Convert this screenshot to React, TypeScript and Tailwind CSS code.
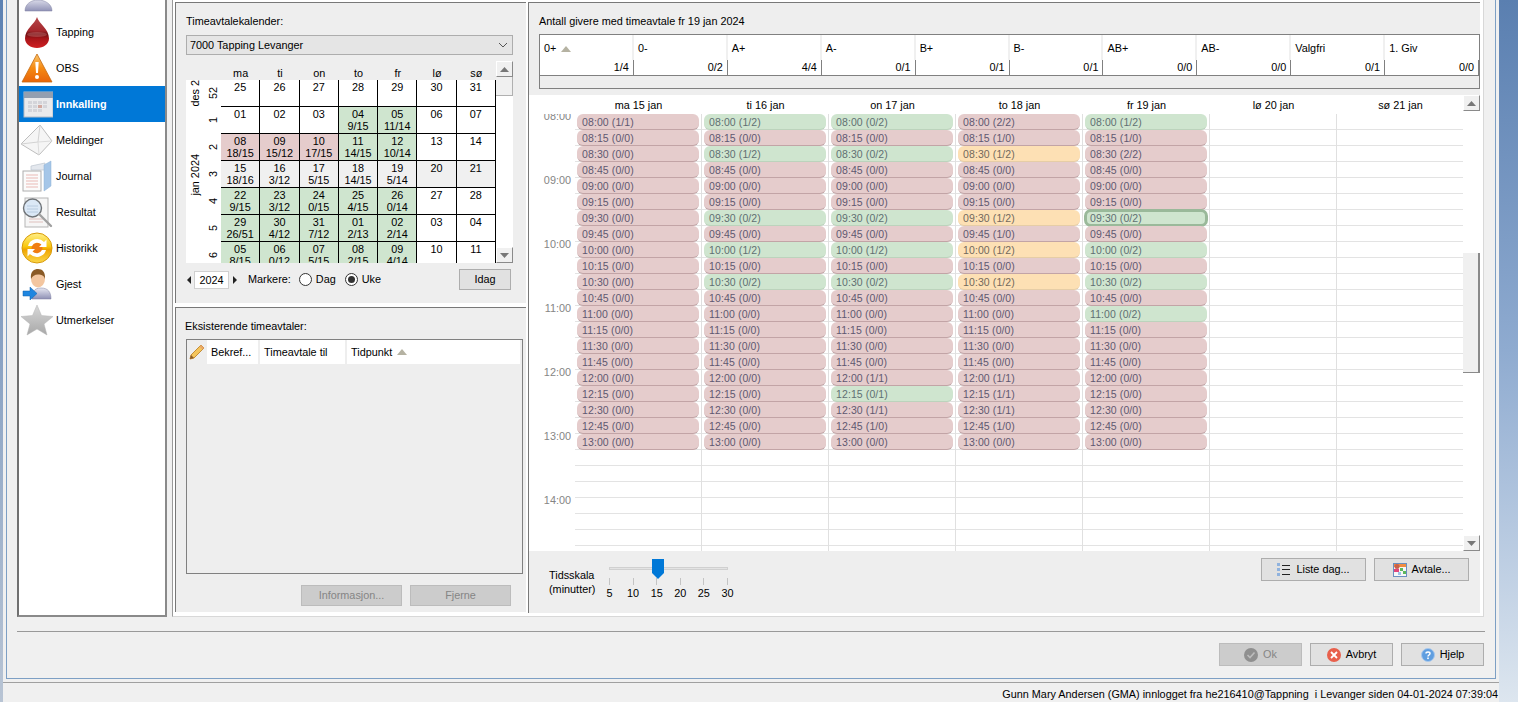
import React from "react";

type Tone = "r" | "g" | "o";

// ---------- icons ----------
function DropIcon() {
  return (
    <svg width="32" height="32" viewBox="0 0 32 32">
      <defs>
        <linearGradient id="dropFill" x1="0" y1="0" x2="0" y2="1">
          <stop offset="0" stopColor="#b4474a" />
          <stop offset="0.45" stopColor="#a5272c" />
          <stop offset="0.55" stopColor="#6e0f12" />
          <stop offset="0.7" stopColor="#a81519" />
          <stop offset="1" stopColor="#cf1f22" />
        </linearGradient>
      </defs>
      <path d="M16 1C14 8 4 13 4 22.500C4 28 9.500 32 16 32C22.500 32 28 28 28 22.500C28 13 18 8 16 1Z" fill="url(#dropFill)" />
      <ellipse cx="16" cy="18.500" rx="10" ry="2.500" fill="#d98a8a" opacity="0.35" />
    </svg>
  );
}
function WarnIcon() {
  return (
    <svg width="32" height="32" viewBox="0 0 32 32">
      <defs>
        <linearGradient id="warnFill" x1="0" y1="0" x2="0" y2="1">
          <stop offset="0" stopColor="#f9c56c" />
          <stop offset="0.5" stopColor="#f58a12" />
          <stop offset="1" stopColor="#e8640a" />
        </linearGradient>
      </defs>
      <path d="M16 2L31 30H1Z" fill="url(#warnFill)" stroke="#c46a12" strokeWidth="0.800" strokeLinejoin="round" />
      <path d="M14.300 10H17.700L17 21H15Z" fill="#fff" />
      <circle cx="16" cy="25" r="2" fill="#fff" />
    </svg>
  );
}
function CalendarIcon() {
  return (
    <svg width="32" height="32" viewBox="0 0 32 32">
      <rect x="3" y="4" width="29" height="25" fill="#e9eaec" stroke="#b5bcc6" />
      <rect x="3" y="4" width="29" height="6" fill="#939fb0" />
      <g fill="#d4d5da">
        <rect x="7" y="13" width="4" height="3" /><rect x="12" y="13" width="4" height="3" /><rect x="17" y="13" width="4" height="3" /><rect x="22" y="13" width="4" height="3" />
        <rect x="7" y="17" width="4" height="3" /><rect x="12" y="17" width="4" height="3" /><rect x="22" y="17" width="4" height="3" />
        <rect x="7" y="21" width="4" height="3" /><rect x="12" y="21" width="4" height="3" /><rect x="17" y="21" width="4" height="3" />
      </g>
      <rect x="17" y="17" width="4" height="3" fill="#d2a9a0" />
    </svg>
  );
}
function MailIcon() {
  return (
    <svg width="32" height="32" viewBox="0 0 32 32">
      <path d="M0 20L19 1L31 17L18 31Z" fill="#f5f5f5" stroke="#bdbdbd" />
      <path d="M0 20L17 18L19 1" fill="none" stroke="#d2d2d2" />
      <path d="M18 31L17 18L31 17" fill="none" stroke="#dcdcdc" />
    </svg>
  );
}
function JournalIcon() {
  return (
    <svg width="32" height="32" viewBox="0 0 32 32">
      <path d="M10 6L24 3V10H10Z" fill="#e4e8ee" stroke="#bcc4ce" strokeWidth="0.700" />
      <path d="M23 5L30 1V26L23 31Z" fill="#a5c6e8" stroke="#8fb2d6" strokeWidth="0.500" />
      <rect x="2" y="11" width="18" height="20" fill="#fbfbfb" stroke="#aeaeae" />
      <path d="M5 15H17M5 18H17M5 21H17M5 24H17M5 27H17" stroke="#e6a9a4" strokeWidth="0.800" />
    </svg>
  );
}
function SearchIcon() {
  return (
    <svg width="32" height="32" viewBox="0 0 32 32">
      <rect x="4" y="2" width="23" height="29" fill="#f6f6f6" stroke="#b5b5b5" />
      <path d="M8 23H22M8 26H22" stroke="#d9b4b0" strokeWidth="0.800" />
      <circle cx="11.500" cy="12" r="9" fill="#dbe8f6" stroke="#6f7377" strokeWidth="1.400" />
      <path d="M6 10H17M6 13H17M6 16H17" stroke="#b0c4da" strokeWidth="0.800" />
      <path d="M18.500 18.500L30 30" stroke="#a0a0a0" strokeWidth="2.400" strokeLinecap="round" />
    </svg>
  );
}
function SyncIcon() {
  return (
    <svg width="32" height="32" viewBox="0 0 32 32">
      <defs>
        <linearGradient id="syncFill" x1="0" y1="0" x2="0" y2="1">
          <stop offset="0" stopColor="#fff08a" />
          <stop offset="0.45" stopColor="#f9c80e" />
          <stop offset="0.55" stopColor="#f0a400" />
          <stop offset="1" stopColor="#fbd84a" />
        </linearGradient>
      </defs>
      <circle cx="16" cy="16" r="15" fill="url(#syncFill)" stroke="#d89a08" />
      <circle cx="16" cy="16" r="5.500" fill="#f07d12" />
      <path d="M7 14A9.500 9.500 0 0 1 23 10L25.500 7.500V15H18L20.500 12.500A6 6 0 0 0 11 14Z" fill="#fff" />
      <path d="M25 18A9.500 9.500 0 0 1 9 22L6.500 24.500V17H14L11.500 19.500A6 6 0 0 0 21 18Z" fill="#fff" />
    </svg>
  );
}
function GuestIcon() {
  return (
    <svg width="32" height="32" viewBox="0 0 32 32">
      <defs>
        <linearGradient id="guestBody" x1="0" y1="0" x2="0" y2="1">
          <stop offset="0" stopColor="#e6e7f2" />
          <stop offset="1" stopColor="#8e90b4" />
        </linearGradient>
      </defs>
      <path d="M11 31C11 24 13 20 20 20C27 20 30 24 30 31Z" fill="url(#guestBody)" stroke="#7c7fa0" strokeWidth="0.500" />
      <ellipse cx="17" cy="11" rx="7" ry="8.500" fill="#f3c6a0" />
      <path d="M10 11C9 3 13.500 1 17 1C21.500 1 24.500 4 24 11C23 7.500 20.500 6.500 17 6.500C13.500 6.500 11.500 8 10 11Z" fill="#8a5a26" />
      <path d="M2 23H9V19L16 25.500L9 32V28H2Z" fill="#1f86e0" stroke="#0d5fab" strokeWidth="0.500" />
    </svg>
  );
}
function StarIcon() {
  return (
    <svg width="32" height="32" viewBox="0 0 32 32">
      <defs>
        <linearGradient id="starFill" x1="0" y1="0" x2="0" y2="1">
          <stop offset="0" stopColor="#d8d8d8" />
          <stop offset="1" stopColor="#a8a8a8" />
        </linearGradient>
      </defs>
      <path d="M16 1L20.500 11.500L32 12.500L23 20L26 31L16 25L6 31L9 20L0 12.500L11.500 11.500Z" fill="url(#starFill)" stroke="#b5b5b5" strokeWidth="0.500" />
    </svg>
  );
}
function TopCutIcon() {
  return (
    <svg width="32" height="32" viewBox="0 0 32 32">
      <defs>
        <linearGradient id="topBody" x1="0" y1="0" x2="0" y2="1">
          <stop offset="0" stopColor="#d8d9e8" />
          <stop offset="1" stopColor="#9092b6" />
        </linearGradient>
      </defs>
      <path d="M3 31C3 24 9 20 16 20C23 20 30 24 30 31Z" fill="url(#topBody)" stroke="#7c7fa0" strokeWidth="0.500" />
    </svg>
  );
}
function PencilIcon() {
  return (
    <svg width="16" height="16" viewBox="0 0 16 16">
      <path d="M12 1L15 4L5 14L1 15L2 11Z" fill="#f4c55c" stroke="#b9791c" strokeWidth="0.800" strokeLinejoin="round" />
      <path d="M2 11L5 14L1 15Z" fill="#8a5a2a" />
      <path d="M12 1L15 4L13.500 5.500L10.500 2.500Z" fill="#e8a66a" />
    </svg>
  );
}
function ListIcon() {
  return (
    <svg width="14" height="14" viewBox="0 0 14 14">
      <g fill="#8fb2de">
        <rect x="0" y="0" width="3" height="3" />
        <rect x="0" y="5" width="3" height="3" />
        <rect x="0" y="10" width="3" height="3" />
      </g>
      <path d="M5 2.500H13M5 6.500H13M5 11.500H13" stroke="#222" />
    </svg>
  );
}
function AvtaleIcon() {
  return (
    <svg width="14" height="14" viewBox="0 0 14 14">
      <rect x="0.500" y="0.500" width="13" height="13" fill="#f7f7f7" stroke="#6a8fc0" />
      <rect x="1" y="1" width="12" height="3" fill="#f08c40" />
      <rect x="7" y="5" width="3" height="3" fill="#5cb85c" />
      <rect x="10" y="8" width="3" height="3" fill="#5cb85c" />
      <rect x="5" y="9" width="3" height="3" fill="#9cc4e8" />
      <circle cx="4" cy="3.500" r="2.500" fill="#c9604a" />
      <rect x="1" y="6" width="5" height="3" fill="#e0457a" />
    </svg>
  );
}
function OkIcon() {
  return (
    <svg width="14" height="14" viewBox="0 0 14 14">
      <circle cx="7" cy="7" r="7" fill="#8f8f8f" />
      <path d="M3.500 7L6 9.500L10.500 4.500" fill="none" stroke="#bdbdbd" strokeWidth="1.600" />
    </svg>
  );
}
function CancelIcon() {
  return (
    <svg width="14" height="14" viewBox="0 0 14 14">
      <circle cx="7" cy="7" r="7" fill="#e8604c" />
      <path d="M4 4L10 10M10 4L4 10" stroke="#fff" strokeWidth="1.800" />
    </svg>
  );
}
function HelpIcon() {
  return (
    <svg width="14" height="14" viewBox="0 0 14 14">
      <circle cx="7" cy="7" r="6.500" fill="#5f9ee0" stroke="#a9c8ec" />
      <path d="M5 5.500C5 3.500 9 3.500 9 5.500C9 7 7 7 7 8.500" fill="none" stroke="#fff" strokeWidth="1.500" />
      <rect x="6.200" y="9.500" width="1.600" height="1.600" fill="#fff" />
    </svg>
  );
}
function Caret({ dir }: { dir: "up" | "down" }) {
  return (
    <svg width="9" height="5" viewBox="0 0 9 5">
      <path d={dir === "up" ? "M4.500 0L9 5H0Z" : "M0 0H9L4.500 5Z"} fill="#777777" />
    </svg>
  );
}
function SortUp() {
  return (
    <svg width="10" height="6" viewBox="0 0 10 6" className="ml-[5px]">
      <path d="M5 0L10 6H0Z" fill="#b5b2a2" />
    </svg>
  );
}

// ---------- sidebar ----------
const navItems: { label: string; icon: React.ReactNode }[] = [
  { label: "Tapping", icon: <DropIcon /> },
  { label: "OBS", icon: <WarnIcon /> },
  { label: "Innkalling", icon: <CalendarIcon /> },
  { label: "Meldinger", icon: <MailIcon /> },
  { label: "Journal", icon: <JournalIcon /> },
  { label: "Resultat", icon: <SearchIcon /> },
  { label: "Historikk", icon: <SyncIcon /> },
  { label: "Gjest", icon: <GuestIcon /> },
  { label: "Utmerkelser", icon: <StarIcon /> },
];

function Sidebar() {
  return (
    <div className="ml-[10px] w-[150px] h-[617px] border-2 border-t-0 border-l-[#707070] border-r-[#8a8a8a] border-b-[#8a8a8a] bg-white overflow-hidden flex flex-col shrink-0">
      <div className="h-[36px] -mt-[22px] shrink-0 flex items-center pl-[3px]">
        <TopCutIcon />
      </div>
      {navItems.map((item) => {
        const active = item.label === "Innkalling";
        return (
          <div
            key={item.label}
            className={
              active
                ? "h-[36px] shrink-0 flex items-center pl-[2px] bg-[#0078d7] text-white font-bold"
                : "h-[36px] shrink-0 flex items-center pl-[2px] text-black"
            }
          >
            <div className="w-[32px] h-[32px] shrink-0">{item.icon}</div>
            <span className="ml-[3px]">{item.label}</span>
          </div>
        );
      })}
    </div>
  );
}

// ---------- calendar ----------
type CalCell = { d: string; n?: string; c?: string };
const G = "bg-[#cfe5cf]";
const R = "bg-[#e5cccc]";
const S = "bg-[#f0f0f0]";
const calRows: { week: string; cells: CalCell[] }[] = [
  { week: "52", cells: [{ d: "25" }, { d: "26" }, { d: "27" }, { d: "28" }, { d: "29" }, { d: "30" }, { d: "31" }] },
  { week: "1", cells: [{ d: "01" }, { d: "02" }, { d: "03" }, { d: "04", n: "9/15", c: G }, { d: "05", n: "11/14", c: G }, { d: "06" }, { d: "07" }] },
  { week: "2", cells: [{ d: "08", n: "18/15", c: R }, { d: "09", n: "15/12", c: R }, { d: "10", n: "17/15", c: R }, { d: "11", n: "14/15", c: G }, { d: "12", n: "10/14", c: G }, { d: "13" }, { d: "14" }] },
  { week: "3", cells: [{ d: "15", n: "18/16", c: S }, { d: "16", n: "3/12", c: S }, { d: "17", n: "5/15", c: S }, { d: "18", n: "14/15", c: S }, { d: "19", n: "5/14", c: S }, { d: "20", c: S }, { d: "21", c: S }] },
  { week: "4", cells: [{ d: "22", n: "9/15", c: G }, { d: "23", n: "3/12", c: G }, { d: "24", n: "0/15", c: G }, { d: "25", n: "4/15", c: G }, { d: "26", n: "0/14", c: G }, { d: "27" }, { d: "28" }] },
  { week: "5", cells: [{ d: "29", n: "26/51", c: G }, { d: "30", n: "4/12", c: G }, { d: "31", n: "7/12", c: G }, { d: "01", n: "2/13", c: G }, { d: "02", n: "2/14", c: G }, { d: "03" }, { d: "04" }] },
  { week: "6", cells: [{ d: "05", n: "8/15", c: G }, { d: "06", n: "0/12", c: G }, { d: "07", n: "5/15", c: G }, { d: "08", n: "2/15", c: G }, { d: "09", n: "4/14", c: G }, { d: "10" }, { d: "11" }] },
];
const calDays = ["ma", "ti", "on", "to", "fr", "lø", "sø"];

function ScrollBtn({ dir }: { dir: "up" | "down" }) {
  return (
    <div className="h-[16px] w-full shrink-0 bg-[#f0f0f0] border-r border-b border-r-[#8a8a8a] border-b-[#8a8a8a] border-t border-l border-t-white border-l-white flex items-center justify-center">
      <Caret dir={dir} />
    </div>
  );
}

function Calendar() {
  return (
    <div className="flex w-[327px] h-[202px]">
      <div className="w-[310px] flex flex-col">
        <div className="h-[19px] flex pl-[35px] shrink-0">
          {calDays.map((d) => (
            <div key={d} className="w-[39.300px] text-center pt-[4px]">{d}</div>
          ))}
        </div>
        <div className="h-[183px] bg-white overflow-hidden grid grid-cols-[19px_16px_1fr] grid-rows-[27px_27px_27px_27px_27px_27px_27px]">
          <div className="col-start-1 row-start-1 flex items-center justify-center">
            <span className="[writing-mode:vertical-rl] rotate-180 whitespace-nowrap">des 2</span>
          </div>
          <div className="col-start-1 row-start-2 row-span-5 flex items-center justify-center">
            <span className="[writing-mode:vertical-rl] rotate-180 whitespace-nowrap">jan 2024</span>
          </div>
          {calRows.map((row, i) => (
            <React.Fragment key={row.week}>
              <div
                className="col-start-2 flex items-center justify-center pl-[1px]"
                style={{ gridRowStart: i + 1 }}
              >
                <span className="[writing-mode:vertical-rl] rotate-180">{row.week}</span>
              </div>
              <div className="col-start-3 flex" style={{ gridRowStart: i + 1 }}>
                {row.cells.map((cell, j) => (
                  <div
                    key={j}
                    className={`flex-1 border-r border-b border-black text-center leading-[12px] pt-[1px] ${cell.c ?? ""}`}
                  >
                    <div>{cell.d}</div>
                    {cell.n && <div>{cell.n}</div>}
                  </div>
                ))}
              </div>
            </React.Fragment>
          ))}
        </div>
      </div>
      <div className="w-[17px] flex flex-col bg-white">
        <ScrollBtn dir="up" />
        <div className="h-[19px] bg-[#f0f0f0] border-r border-b border-r-[#b0b0b0] border-b-[#b0b0b0] shrink-0" />
        <div className="flex-1" />
        <ScrollBtn dir="down" />
      </div>
    </div>
  );
}

function Radio({ on, label }: { on: boolean; label: string }) {
  return (
    <div className="flex items-center">
      <div className="w-[13px] h-[13px] rounded-full border border-[#333] bg-white flex items-center justify-center">
        {on && <div className="w-[7px] h-[7px] rounded-full bg-[#333]" />}
      </div>
      <span className="ml-[4px]">{label}</span>
    </div>
  );
}

function CalendarPanel() {
  return (
    <div className="h-[301px] shrink-0 border-t border-l border-[#787878] bg-[#eeeeee] pl-[10px] flex flex-col">
      <div className="mt-[11px] h-[15px] leading-[15px]">Timeavtalekalender:</div>
      <div className="mt-[6px] w-[327px] h-[20px] bg-[#e5e5e5] border border-[#adadad] flex items-center justify-between pl-[3px] pr-[4px]">
        <span>7000 Tapping Levanger</span>
        <svg width="10" height="6" viewBox="0 0 10 6">
          <path d="M1 1L5 5L9 1" fill="none" stroke="#555" />
        </svg>
      </div>
      <div className="mt-[6px]">
        <Calendar />
      </div>
      <div className="mt-[6px] h-[21px] flex items-center w-[325px]">
        <svg width="4" height="8" viewBox="0 0 4 8" className="ml-[1px]">
          <path d="M4 0V8L0 4Z" fill="#222" />
        </svg>
        <div className="ml-[3px] w-[35px] h-[18px] bg-white border border-[#d0d0d0] text-center leading-[16px]">2024</div>
        <svg width="4" height="8" viewBox="0 0 4 8" className="ml-[4px]">
          <path d="M0 0V8L4 4Z" fill="#222" />
        </svg>
        <span className="ml-[11px]">Markere:</span>
        <div className="ml-[8px]"><Radio on={false} label="Dag" /></div>
        <div className="ml-[9px]"><Radio on label="Uke" /></div>
        <button className="ml-auto w-[52px] h-[21px] bg-[#e1e1e1] border border-[#adadad]">Idag</button>
      </div>
    </div>
  );
}

function ExistingPanel() {
  return (
    <div className="mt-[4px] h-[305px] shrink-0 border-t border-l border-[#787878] bg-[#eeeeee] pl-[10px] flex flex-col">
      <div className="mt-[11px] -ml-[1px] h-[15px] leading-[15px]">Eksisterende timeavtaler:</div>
      <div className="mt-[5px] w-[337px] h-[235px] border border-[#808080] flex items-start">
        <div className="w-[19px] h-[24px] flex items-center justify-center"><PencilIcon /></div>
        <div className="ml-[1px] w-[51px] h-[24px] bg-white flex items-center pl-[4px]">Bekref...</div>
        <div className="ml-[2px] w-[85px] h-[24px] bg-white flex items-center pl-[4px]">Timeavtale til</div>
        <div className="ml-[2px] w-[173px] h-[24px] bg-white flex items-center pl-[4px]">
          Tidpunkt
          <SortUp />
        </div>
      </div>
      <div className="mt-[11px] flex justify-end w-[325px] gap-[8px]">
        <button className="w-[101px] h-[21px] bg-[#cccccc] border border-[#bcbcbc] text-[#858585]">Informasjon...</button>
        <button className="w-[101px] h-[21px] bg-[#cccccc] border border-[#bcbcbc] text-[#858585]">Fjerne</button>
      </div>
    </div>
  );
}

// ---------- blood type table ----------
const bloodTypes: [string, string][] = [
  ["0+", "1/4"], ["0-", "0/2"], ["A+", "4/4"], ["A-", "0/1"], ["B+", "0/1"],
  ["B-", "0/1"], ["AB+", "0/0"], ["AB-", "0/0"], ["Valgfri", "0/1"], ["1. Giv", "0/0"],
];

function BloodTable() {
  return (
    <div className="mt-[5px] w-[941px] h-[55px] border border-[#808080] flex flex-col">
      <div className="flex h-[25px] bg-white shrink-0">
        {bloodTypes.map(([name]) => (
          <div key={name} className="w-[94px] flex items-center pl-[4px] pt-[2px] border-r-2 border-[#f0f0f0] last:border-r-0">
            {name}
            {name === "0+" && <SortUp />}
          </div>
        ))}
      </div>
      <div className="flex h-[16px] bg-white border-b border-[#808080] shrink-0">
        {bloodTypes.map(([name, val]) => (
          <div key={name} className="w-[94px] text-right pr-[4px] border-r border-[#808080] leading-[15px]">
            {val}
          </div>
        ))}
      </div>
    </div>
  );
}

// ---------- schedule ----------
const times = [
  "08:00", "08:15", "08:30", "08:45", "09:00", "09:15", "09:30", "09:45", "10:00", "10:15", "10:30",
  "10:45", "11:00", "11:15", "11:30", "11:45", "12:00", "12:15", "12:30", "12:45", "13:00",
];

const specials: Record<string, [string, Tone][]> = {
  ma: [["1/1", "r"]],
  ti: [
    ["1/2", "g"], ["0/0", "r"], ["1/2", "g"], ["0/0", "r"], ["0/0", "r"], ["0/0", "r"], ["0/2", "g"], ["0/0", "r"],
    ["1/2", "g"], ["0/0", "r"], ["0/2", "g"],
  ],
  on: [
    ["0/2", "g"], ["0/0", "r"], ["0/2", "g"], ["0/0", "r"], ["0/0", "r"], ["0/0", "r"], ["0/2", "g"], ["0/0", "r"],
    ["1/2", "g"], ["0/0", "r"], ["0/2", "g"], ["0/0", "r"], ["0/0", "r"], ["0/0", "r"], ["0/0", "r"], ["0/0", "r"],
    ["1/1", "r"], ["0/1", "g"], ["1/1", "r"], ["1/0", "r"],
  ],
  to: [
    ["2/2", "r"], ["1/0", "r"], ["1/2", "o"], ["0/0", "r"], ["0/0", "r"], ["0/0", "r"], ["1/2", "o"], ["1/0", "r"],
    ["1/2", "o"], ["0/0", "r"], ["1/2", "o"], ["0/0", "r"], ["0/0", "r"], ["0/0", "r"], ["0/0", "r"], ["0/0", "r"],
    ["1/1", "r"], ["1/1", "r"], ["1/1", "r"], ["1/0", "r"],
  ],
  fr: [
    ["1/2", "g"], ["1/0", "r"], ["2/2", "r"], ["0/0", "r"], ["0/0", "r"], ["0/0", "r"], ["0/2", "g"], ["0/0", "r"],
    ["0/2", "g"], ["0/0", "r"], ["0/2", "g"], ["0/0", "r"], ["0/2", "g"],
  ],
};

const days = [
  { key: "ma", label: "ma 15 jan" },
  { key: "ti", label: "ti 16 jan" },
  { key: "on", label: "on 17 jan" },
  { key: "to", label: "to 18 jan" },
  { key: "fr", label: "fr 19 jan" },
  { key: "lo", label: "lø 20 jan" },
  { key: "so", label: "sø 21 jan" },
];

const toneClass: Record<Tone, string> = {
  r: "bg-[#e5cccc] border-b border-b-[#c2a4a6] text-[#5f5870]",
  g: "bg-[#cfe5cf] border-b border-b-[#bcd3bc] text-[#5f7072]",
  o: "bg-[#fde0b4] border-b border-b-[#e6cda6] text-[#72695c]",
};

function Slot({ time, val, tone, selected }: { time: string; val: string; tone: Tone; selected: boolean }) {
  return (
    <div
      className={`ml-[2px] w-[122px] h-[16px] rounded-[6px] pl-[5px] text-[10.500px] tracking-[0.1px] leading-[16px] relative ${toneClass[tone]} ${
        selected ? "outline-[3px] -outline-offset-2 outline-[#9ab99a]" : ""
      }`}
    >
      {time} ({val})
    </div>
  );
}

function DayColumn({ dayKey }: { dayKey: string }) {
  const hasSlots = dayKey !== "lo" && dayKey !== "so";
  const rows = Array.from({ length: 28 }, (_, i) => i);
  return (
    <div className="w-[127px] shrink-0 border-r border-[#e0e0e0] h-[437px] overflow-hidden">
      {rows.map((i) => {
        const time = times[i];
        const sp = specials[dayKey]?.[i];
        return (
          <div key={i} className="h-[16px] border-b border-[#e3e3e3]">
            {hasSlots && time && (
              <Slot
                time={time}
                val={sp ? sp[0] : "0/0"}
                tone={sp ? sp[1] : "r"}
                selected={dayKey === "fr" && time === "09:30"}
              />
            )}
          </div>
        );
      })}
    </div>
  );
}

function Schedule() {
  return (
    <div className="h-[456px] shrink-0 bg-white flex">
      <div className="w-[46px] shrink-0 flex flex-col">
        <div className="h-[19px] shrink-0" />
        <div className="flex-1 overflow-hidden text-[#858585] text-right pr-[4px]">
          <div className="-mt-[5px]">
            {["08:00", "09:00", "10:00", "11:00", "12:00", "13:00", "14:00"].map((t) => (
              <div key={t} className="h-[64px] leading-[14px]">{t}</div>
            ))}
          </div>
        </div>
      </div>
      <div className="w-[888px] shrink-0 overflow-hidden flex flex-col">
        <div className="h-[19px] shrink-0 flex">
          {days.map((d) => (
            <div key={d.key} className="w-[127px] shrink-0 text-center leading-[20px]">{d.label}</div>
          ))}
        </div>
        <div className="flex">
          {days.map((d) => (
            <DayColumn key={d.key} dayKey={d.key} />
          ))}
        </div>
      </div>
      <div className="w-[17px] shrink-0 flex flex-col bg-white">
        <ScrollBtn dir="up" />
        <div className="h-[142px] shrink-0" />
        <div className="h-[120px] shrink-0 bg-[#f0f0f0] border-r-2 border-b border-[#8a8a8a]" />
        <div className="flex-1" />
        <ScrollBtn dir="down" />
      </div>
    </div>
  );
}

function TimeScale() {
  const marks = ["5", "10", "15", "20", "25", "30"];
  return (
    <div className="flex-1 bg-[#eeeeee] flex pl-[20px]">
      <div className="pt-[17px] leading-[14px] w-[60px] shrink-0">
        <div>Tidsskala</div>
        <div>(minutter)</div>
      </div>
      <div className="w-[119px] flex flex-col pt-[16px] relative shrink-0">
        <div className="h-[3px] bg-[#e3e3e3] border border-[#d0d0d0]" />
        <svg width="12" height="20" viewBox="0 0 12 20" className="absolute left-[43px] top-[8px]">
          <path d="M0 0H12V14L6 20L0 14Z" fill="#0078d7" />
        </svg>
        <div className="mt-[8px] flex justify-between">
          {marks.map((m) => (
            <div key={m} className="w-px flex flex-col items-center">
              <div className="w-px h-[7px] bg-[#c4c4c4] shrink-0" />
              <span className="mt-px leading-[14px]">{m}</span>
            </div>
          ))}
        </div>
      </div>
      <div className="ml-auto mr-[11px] pt-[7px] flex items-start gap-[8px]">
        <button className="w-[105px] h-[23px] bg-[#e1e1e1] border border-[#adadad] flex items-center justify-center gap-[5px]">
          <ListIcon />
          Liste dag...
        </button>
        <button className="w-[95px] h-[23px] bg-[#e1e1e1] border border-[#adadad] flex items-center justify-center gap-[5px]">
          <AvtaleIcon />
          Avtale...
        </button>
      </div>
    </div>
  );
}

function DialogButton({ icon, label, disabled }: { icon: React.ReactNode; label: string; disabled?: boolean }) {
  return (
    <button
      className={
        disabled
          ? "w-[83px] h-[23px] bg-[#cccccc] border border-[#bcbcbc] text-[#858585] flex items-center justify-center gap-[5px]"
          : "w-[83px] h-[23px] bg-[#e1e1e1] border border-[#adadad] flex items-center justify-center gap-[5px]"
      }
    >
      {icon}
      {label}
    </button>
  );
}

export default function App() {
  return (
    <div className="w-[1518px] h-[702px] overflow-hidden flex text-[10.850px] text-black [font-family:'Liberation_Sans',Arial,sans-serif]">
      <div className="w-[3px] shrink-0 bg-gradient-to-b from-[#5d82b3] to-[#b8c4d4]" />

      {/* Window */}
      <div className="w-[1496px] shrink-0 bg-[#f0f0f0] flex flex-col">
        <div className="ml-[3px] mr-[3px] h-[679px] shrink-0 border-x border-b border-[#7d9fc4] flex flex-col">
          <div className="flex h-[617px] shrink-0">
            <Sidebar />
            <div className="ml-[5px] w-[1312px] h-[617px] border-l border-b border-r border-l-[#9a9a9a] border-b-[#d8d8d8] border-r-[#d8d8d8] bg-white pl-[2px] flex shrink-0">
              <div className="w-[351px] shrink-0 pt-[2px] flex flex-col">
                <CalendarPanel />
                <ExistingPanel />
              </div>
              <div className="ml-[2px] w-[952px] shrink-0 mt-[2px] h-[611px] border-t border-l border-[#787878] flex flex-col">
                <div className="h-[92px] shrink-0 bg-[#eeeeee] pl-[10px] pt-[11px]">
                  <div className="h-[15px] leading-[15px]">Antall givere med timeavtale fr 19 jan 2024</div>
                  <BloodTable />
                </div>
                <Schedule />
                <TimeScale />
              </div>
            </div>
          </div>

          <div className="ml-[10px] mr-[10px] mt-[14px] h-px bg-[#999999] shrink-0" />
          <div className="mt-[11px] mr-[11px] flex justify-end gap-[8px]">
            <DialogButton disabled icon={<OkIcon />} label="Ok" />
            <DialogButton icon={<CancelIcon />} label="Avbryt" />
            <DialogButton icon={<HelpIcon />} label="Hjelp" />
          </div>
        </div>

        <div className="mt-[3px] flex-1 border-t border-[#a0a0a0] text-right pr-[1px] leading-[22px] whitespace-pre">
          {"Gunn Mary Andersen (GMA) innlogget fra he216410@Tappning  i Levanger siden 04-01-2024 07:39:04"}
        </div>
      </div>

      <div className="flex-1 bg-gradient-to-b from-[#5a7fb0] via-[#8fabd0] to-[#dde6ef]" />
    </div>
  );
}
